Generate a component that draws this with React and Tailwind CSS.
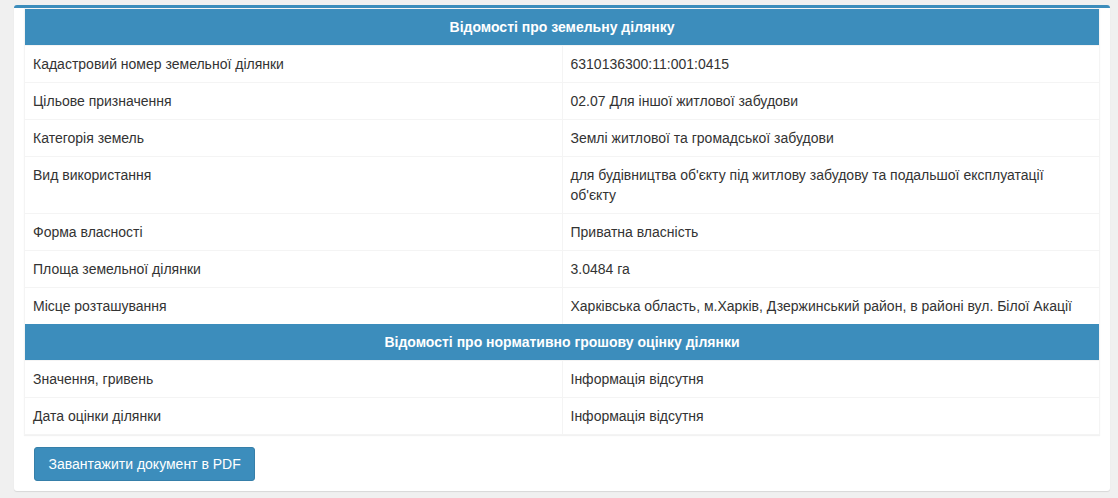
export default function App() {
  const rows1 = [
    ["Кадастровий номер земельної ділянки", "6310136300:11:001:0415"],
    ["Цільове призначення", "02.07 Для іншої житлової забудови"],
    ["Категорія земель", "Землі житлової та громадської забудови"],
    ["Вид використання", "для будівництва об'єкту під житлову забудову та подальшої експлуатації об'єкту"],
    ["Форма власності", "Приватна власність"],
    ["Площа земельної ділянки", "3.0484 га"],
    ["Місце розташування", "Харківська область, м.Харків, Дзержинський район, в районі вул. Білої Акації"],
  ];
  const rows2 = [
    ["Значення, гривень", "Інформація відсутня"],
    ["Дата оцінки ділянки", "Інформація відсутня"],
  ];
  const Row = ({ a, b }) => (
    <tr className="border-t border-[#f4f4f4]">
      <td className="w-1/2 px-2 py-2 align-top leading-5">{a}</td>
      <td className="w-1/2 px-2 py-2 align-top leading-5 border-l border-[#f4f4f4]">{b}</td>
    </tr>
  );
  const Head = ({ t }) => (
    <tr>
      <th colSpan={2} className="bg-[#3c8dbc] text-white font-bold text-center px-2 py-2 leading-5">{t}</th>
    </tr>
  );
  return (
    <div className="min-h-[498px] bg-[#f0f0f0] pt-[5px] px-[14px] pr-[8px] text-[14px] text-[#333] font-['Liberation_Sans',Arial,sans-serif]">
      <div className="bg-white border-t-[3px] border-[#3c8dbc] rounded-[3px] shadow-[0_1px_1px_rgba(0,0,0,0.1)] px-[10px] pb-[10px]">
        <table className="w-full table-fixed border-collapse border border-[#f4f4f4] shadow-[0_1px_1px_rgba(0,0,0,0.05)]">
          <tbody>
            <Head t="Відомості про земельну ділянку" />
            {rows1.map((r, i) => <Row key={i} a={r[0]} b={r[1]} />)}
            <Head t="Відомості про нормативно грошову оцінку ділянки" />
            {rows2.map((r, i) => <Row key={i} a={r[0]} b={r[1]} />)}
          </tbody>
        </table>
        <div className="pt-[12px] pl-[10px]">
          <button className="bg-[#3c8dbc] border border-[#367fa9] rounded-[3px] text-white px-[13.5px] py-[6px] leading-5 text-[14px]">
            Завантажити документ в PDF
          </button>
        </div>
      </div>
    </div>
  );
}
